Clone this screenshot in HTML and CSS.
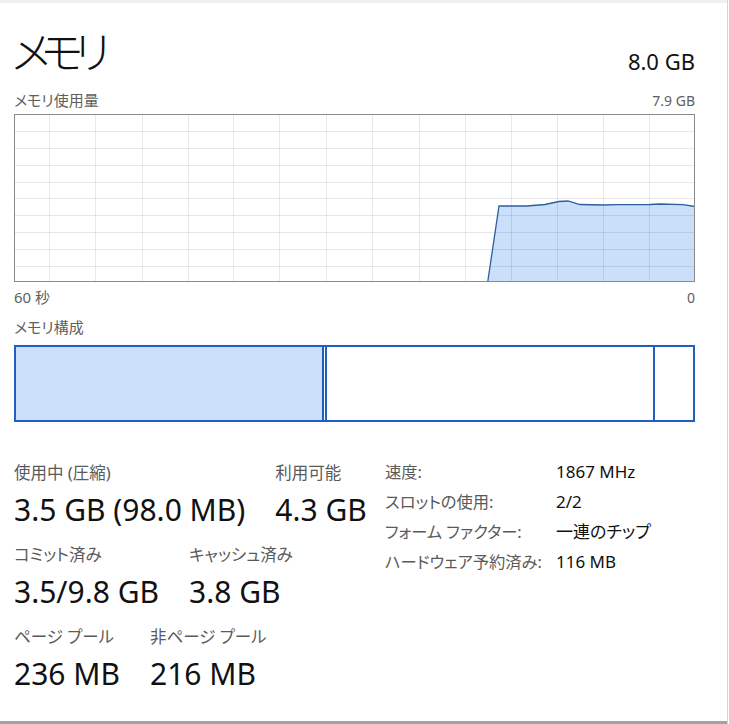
FILE: index.html
```html
<!DOCTYPE html>
<html lang="ja">
<head>
<meta charset="utf-8">
<title>メモリ</title>
<link rel="stylesheet" href="styles.css">
</head>
<body>
<div class="window">
  <div class="topbar"></div>
  <div class="panel">
    <header class="head">
      <h1 class="title">メモリ</h1>
      <div class="total">8.0 GB</div>
    </header>
    <div class="row-labels"><span>メモリ使用量</span><span>7.9 GB</span></div>
    <svg class="chart" width="681" height="168" viewBox="0 0 681 168">
      <rect x="0" y="0" width="681" height="168" fill="#fff"/>
      <path class="area" d="M473.7 168 L485 92 L512.7 92 L531 90.5 L545 87.5 L554 87 L566 90.5 L589 91 L603 90.7 L636 90.5 L646 90 L669 90.7 L681 92.5 L681 168 Z"/>
      <g class="grid">
        <line x1="35.5" y1="0" x2="35.5" y2="168"/>
        <line x1="81.5" y1="0" x2="81.5" y2="168"/>
        <line x1="128.5" y1="0" x2="128.5" y2="168"/>
        <line x1="174.5" y1="0" x2="174.5" y2="168"/>
        <line x1="219.5" y1="0" x2="219.5" y2="168"/>
        <line x1="265.5" y1="0" x2="265.5" y2="168"/>
        <line x1="312.5" y1="0" x2="312.5" y2="168"/>
        <line x1="358.5" y1="0" x2="358.5" y2="168"/>
        <line x1="405.5" y1="0" x2="405.5" y2="168"/>
        <line x1="451.5" y1="0" x2="451.5" y2="168"/>
        <line x1="497.5" y1="0" x2="497.5" y2="168"/>
        <line x1="543.5" y1="0" x2="543.5" y2="168"/>
        <line x1="589.5" y1="0" x2="589.5" y2="168"/>
        <line x1="635.5" y1="0" x2="635.5" y2="168"/>
        <line x1="0" y1="17.5" x2="681" y2="17.5"/>
        <line x1="0" y1="34.5" x2="681" y2="34.5"/>
        <line x1="0" y1="51.5" x2="681" y2="51.5"/>
        <line x1="0" y1="68.5" x2="681" y2="68.5"/>
        <line x1="0" y1="84.5" x2="681" y2="84.5"/>
        <line x1="0" y1="101.5" x2="681" y2="101.5"/>
        <line x1="0" y1="118.5" x2="681" y2="118.5"/>
        <line x1="0" y1="135.5" x2="681" y2="135.5"/>
        <line x1="0" y1="152.5" x2="681" y2="152.5"/>
      </g>
      <path class="line" d="M473.7 168 L485 92 L512.7 92 L531 90.5 L545 87.5 L554 87 L566 90.5 L589 91 L603 90.7 L636 90.5 L646 90 L669 90.7 L681 92.5"/>
      <rect class="frame" x="0.5" y="0.5" width="680" height="167"/>
    </svg>
    <div class="row-labels axis"><span>60 秒</span><span>0</span></div>
    <div class="comp-label">メモリ構成</div>
    <div class="comp">
      <div class="seg inuse"></div>
      <div class="seg modified"></div>
      <div class="seg standby"></div>
      <div class="seg free"></div>
    </div>
    <section class="stats">
      <div class="stats-left">
        <div class="stat-row">
          <div class="stat"><div class="stat-label">使用中 (圧縮)</div><div class="stat-value">3.5 GB (98.0 MB)</div></div>
          <div class="stat"><div class="stat-label">利用可能</div><div class="stat-value">4.3 GB</div></div>
        </div>
        <div class="stat-row">
          <div class="stat"><div class="stat-label">コミット済み</div><div class="stat-value">3.5/9.8 GB</div></div>
          <div class="stat"><div class="stat-label">キャッシュ済み</div><div class="stat-value">3.8 GB</div></div>
        </div>
        <div class="stat-row">
          <div class="stat"><div class="stat-label">ページ プール</div><div class="stat-value">236 MB</div></div>
          <div class="stat"><div class="stat-label">非ページ プール</div><div class="stat-value">216 MB</div></div>
        </div>
      </div>
      <dl class="props">
        <dt>速度:</dt><dd>1867 MHz</dd>
        <dt>スロットの使用:</dt><dd>2/2</dd>
        <dt>フォーム ファクター:</dt><dd>一連のチップ</dd>
        <dt>ハードウェア予約済み:</dt><dd>116 MB</dd>
      </dl>
    </section>
  </div>
  <div class="bottombar"></div>
</div>
</body>
</html>
```
FILE: styles.css
```css
html, body {
  margin: 0;
  padding: 0;
  background: #ffffff;
}

body {
  font-family: "Noto Sans", "Noto Sans CJK JP", sans-serif;
  font-feature-settings: "palt";
  color: #111111;
}

.window {
  width: 728px;
  height: 724px;
  box-sizing: border-box;
  border-right: 1px solid #d4d4d4;
  display: flex;
  flex-direction: column;
  background: #ffffff;
}

.topbar {
  height: 3px;
  background: #efefef;
  flex: none;
}

.panel {
  flex: 1;
  padding: 0 32px 0 14px;
  display: flex;
  flex-direction: column;
}

.head {
  display: flex;
  justify-content: space-between;
  align-items: flex-end;
  margin-top: 22px;
  height: 50px;
}

.title {
  margin: 0 0 0 -2px;
  font-family: "Noto Sans CJK JP", sans-serif;
  font-feature-settings: "palt";
  font-weight: 300;
  font-size: 44px;
  line-height: 50px;
  letter-spacing: -9px;
}

.total {
  font-size: 22px;
  line-height: 26px;
  margin-bottom: 1px;
}

.row-labels {
  display: flex;
  justify-content: space-between;
  font-size: 15px;
  line-height: 19px;
  color: #606060;
  margin-top: 16px;
  height: 19px;
}

.row-labels span:last-child {
  font-size: 14px;
}

.chart {
  display: block;
  margin-top: 4px;
}

.chart .area {
  fill: #cadffa;
}

.chart .grid line {
  stroke: rgba(0, 0, 0, 0.09);
  stroke-width: 1;
}

.chart .line {
  fill: none;
  stroke: #2d5f9f;
  stroke-width: 1.3;
}

.chart .frame {
  fill: none;
  stroke: #8a8a8a;
  stroke-width: 1;
}

.row-labels.axis {
  margin-top: 6px;
}

.comp-label {
  font-size: 15px;
  line-height: 19px;
  color: #606060;
  margin-top: 11px;
}

.comp {
  display: flex;
  height: 77px;
  box-sizing: border-box;
  border: 2px solid #1f5fbf;
  margin-top: 8px;
}

.seg {
  border-right: 2px solid #1f5fbf;
}

.inuse {
  width: 306px;
  background: #cce0fb;
}

.modified {
  width: 1px;
}

.standby {
  width: 326px;
}

.free {
  flex: 1;
  border-right: none;
}

.stats {
  display: flex;
  align-items: flex-start;
  margin-top: 40px;
}

.stats-left {
  width: 371px;
  flex: none;
  display: flex;
  flex-direction: column;
  gap: 16px;
}

.stat-row {
  display: flex;
  gap: 30px;
}

.stat-label {
  font-size: 16.5px;
  line-height: 22px;
  color: #5a5a5a;
}

.stat-value {
  font-size: 30px;
  line-height: 36px;
  margin-top: 8px;
  color: #111111;
}

.props {
  margin: 0;
  display: grid;
  grid-template-columns: 171px auto;
  align-content: start;
  row-gap: 10px;
  font-size: 17px;
  line-height: 20px;
}

.props dt {
  font-size: 16.3px;
  color: #5a5a5a;
}

.props dd {
  margin: 0;
  color: #111111;
}

.bottombar {
  flex: none;
  height: 3px;
  background: #a3a3a3;
}
```
